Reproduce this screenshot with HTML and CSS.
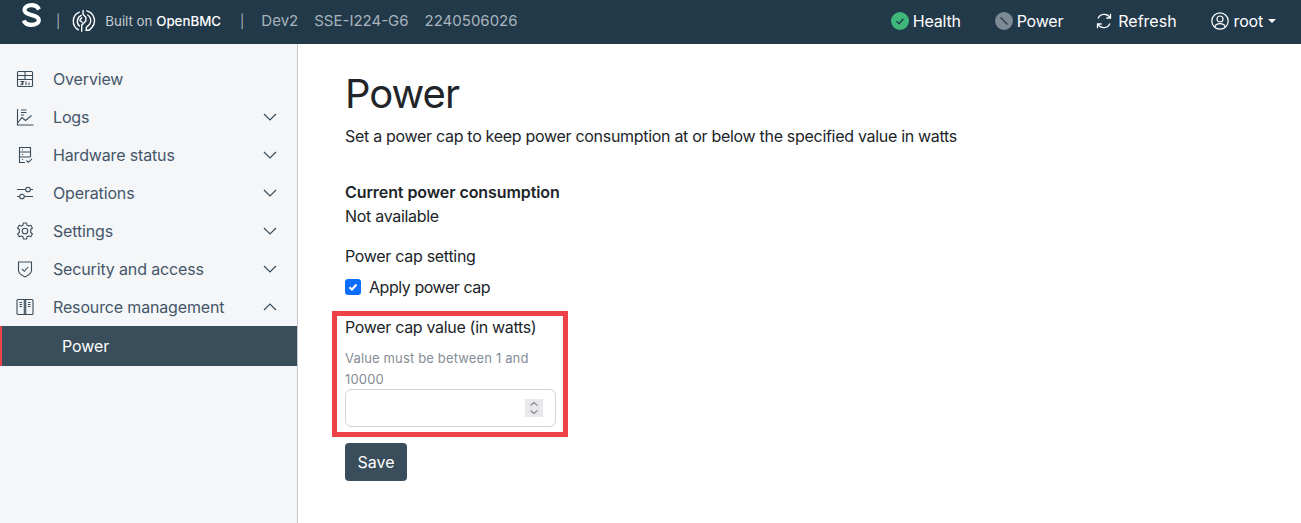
FILE: index.html
```html
<!DOCTYPE html>
<html>
  <head>
    <meta charset="UTF-8" />
    <meta name="viewport" content="width=device-width, initial-scale=1.0" />
    <title>Power</title>
    <link rel="stylesheet" href="styles.css">
  </head>
  <body>
    <header class="topbar">
      <div class="brand">
        <svg class="logo-s" width="19" height="24" viewBox="0 0 19 24" fill="none" stroke="#fff" stroke-width="4.200"><path d="M17 6.500C15.500 3.500 12.500 2.200 9.500 2.200C5.500 2.200 2.500 4 2.500 7C2.500 10 5.500 11 9.500 12C13.500 13 16.800 14 16.800 17C16.800 20 13.500 21.800 9.500 21.800C6 21.800 3 20.500 1.800 17.500" /></svg>
        <span class="sep sep-first">|</span>
        <svg class="logo-bmc" width="24" height="24" viewBox="0 0 26 26" fill="none" stroke="#fff" stroke-width="1.500" stroke-linecap="round">
          <path d="M8 3.500A10.500 10.500 0 0 0 7 22.500" />
          <path d="M10 7A7 7 0 0 0 8 18.500" />
          <path d="M12 1.500V6L15 9V13L10.500 17.500V24" />
          <path d="M16 2A11 11 0 0 1 21.500 20L18.500 23H15" />
          <path d="M17 6.500A7 7 0 0 1 19 16.500L15.500 20V22" />
          <path d="M10.500 9.500L8.500 12L11 14.500" />
        </svg>
        <span class="built">Built on <b>OpenBMC</b></span>
        <span class="sep sep-second">|</span>
        <span class="host">Dev2</span>
        <span class="host">SSE-I224-G6</span>
        <span class="host">2240506026</span>
      </div>
      <div class="status">
        <span class="status-item item-health">
          <svg width="18" height="18" viewBox="0 0 18 18"><circle cx="9" cy="9" r="9" fill="#3fb77a" /><path d="M5.500 9.300L8 11.700L12.500 6.800" fill="none" stroke="#22394a" stroke-width="1.300" /></svg>
          Health
        </span>
        <span class="status-item item-power">
          <svg width="18" height="18" viewBox="0 0 18 18"><circle cx="9" cy="9" r="9" fill="#7d8a94" /><path d="M5.500 5.500L12.500 12.500" fill="none" stroke="#22394a" stroke-width="1.300" /></svg>
          Power
        </span>
        <span class="status-item item-refresh">
          <svg width="18" height="18" viewBox="0 0 18 18" fill="none" stroke="#fff" stroke-width="1.300"><path d="M3 6.500A6.800 6.800 0 0 1 15 5.500" /><path d="M15.500 1.800V6H11.300" /><path d="M15 11.500A6.800 6.800 0 0 1 3 12.500" /><path d="M2.500 16.200V12H6.700" /></svg>
          Refresh
        </span>
        <span class="status-item item-user">
          <svg width="18" height="18" viewBox="0 0 18 18" fill="none" stroke="#fff" stroke-width="1.200"><circle cx="9" cy="9" r="8.200" /><circle cx="9" cy="7" r="3" /><path d="M3.800 15C4.500 12.300 6.500 11.700 9 11.700S13.500 12.300 14.200 15" /></svg>
          root
          <span class="caret"></span>
        </span>
      </div>
    </header>

    <div class="page">
      <nav class="sidebar">
        <a class="nav-item">
          <svg class="nav-icon" width="18" height="18" viewBox="0 0 18 18"><rect x="1.500" y="1.500" width="15" height="15" rx="1" /><path d="M1.500 5.500H16.500M1.500 9.500H16.500M9 1.500V9.500M4.500 11.500H7.500L6 13C7.800 13 7.500 15 4.500 14.700M10 11.500V15M13 12.500V15" /></svg>
          <span class="nav-label">Overview</span>
        </a>
        <a class="nav-item">
          <svg class="nav-icon" width="18" height="18" viewBox="0 0 18 18"><path d="M1.500 1V17H17.500M1.500 15L6 9.500L9.500 12.500L15.500 7.500M5 2H10.500M5 4.500H10.500M5 7H8" /></svg>
          <span class="nav-label">Logs</span>
          <svg class="chevron" width="14" height="8" viewBox="0 0 14 8"><path d="M1 1L7 7L13 1" /></svg>
        </a>
        <a class="nav-item">
          <svg class="nav-icon" width="18" height="18" viewBox="0 0 18 18"><path d="M9 16.500H3.500V1.500H14.500V11M3.500 6H14.500M3.500 11H14.500M6 3.800H7M6 8.500H7M6 13.500H7M10.500 14.500L12.300 16.300L16 12.800" /></svg>
          <span class="nav-label">Hardware status</span>
          <svg class="chevron" width="14" height="8" viewBox="0 0 14 8"><path d="M1 1L7 7L13 1" /></svg>
        </a>
        <a class="nav-item">
          <svg class="nav-icon" width="18" height="18" viewBox="0 0 18 18"><path d="M1 5.500H9.500M14.500 5.500H17M1 12.500H3.500M8.500 12.500H17" /><circle cx="12" cy="5.500" r="2.300" /><circle cx="6" cy="12.500" r="2.300" /></svg>
          <span class="nav-label">Operations</span>
          <svg class="chevron" width="14" height="8" viewBox="0 0 14 8"><path d="M1 1L7 7L13 1" /></svg>
        </a>
        <a class="nav-item">
          <svg class="nav-icon" width="18" height="18" viewBox="0 0 18 18"><circle cx="9" cy="9" r="2.800" /><path d="M7.400 1H10.600L11 3.200L12.700 4.100L14.800 3.300L16.400 6L14.700 7.500V10.500L16.400 12L14.800 14.700L12.700 13.900L11 14.800L10.600 17H7.400L7 14.800L5.300 13.900L3.200 14.700L1.600 12L3.300 10.500V7.500L1.600 6L3.200 3.300L5.300 4.100L7 3.200Z" stroke-linejoin="round" /></svg>
          <span class="nav-label">Settings</span>
          <svg class="chevron" width="14" height="8" viewBox="0 0 14 8"><path d="M1 1L7 7L13 1" /></svg>
        </a>
        <a class="nav-item">
          <svg class="nav-icon" width="18" height="18" viewBox="0 0 18 18"><path d="M2.500 2H15.500V10.500C15.500 13.500 12 15.500 9 17C6 15.500 2.500 13.500 2.500 10.500Z" /><path d="M6 9L8.300 11.300L12.300 7" /></svg>
          <span class="nav-label">Security and access</span>
          <svg class="chevron" width="14" height="8" viewBox="0 0 14 8"><path d="M1 1L7 7L13 1" /></svg>
        </a>
        <a class="nav-item">
          <svg class="nav-icon" width="18" height="18" viewBox="0 0 18 18"><rect x="1" y="1.500" width="16" height="15" rx="1" /><path d="M8.300 1.500V16.500M9.700 1.500V16.500M3.500 4.500H6M3.500 6.500H6M3.500 8.500H6M12 4.500H14.500M12 6.500H14.500M12 8.500H14.500" /></svg>
          <span class="nav-label">Resource management</span>
          <svg class="chevron" width="14" height="8" viewBox="0 0 14 8"><path d="M1 7L7 1L13 7" /></svg>
        </a>
        <a class="nav-sub">Power</a>
      </nav>

      <main class="content">
        <h1>Power</h1>
        <p class="lead">Set a power cap to keep power consumption at or below the specified value in watts</p>

        <dl class="reading">
          <dt>Current power consumption</dt>
          <dd>Not available</dd>
        </dl>

        <p class="cap-title">Power cap setting</p>
        <label class="check">
          <span class="check-box">
            <svg width="10" height="10" viewBox="0 0 10 10"><path d="M1.500 5.200L4 7.500L8.500 2.500" fill="none" stroke="#fff" stroke-width="2" /></svg>
          </span>
          Apply power cap
        </label>

        <div class="cap-group">
          <label class="cap-label" for="cap">Power cap value (in watts)</label>
          <p class="cap-hint">Value must be between 1 and 10000</p>
          <div class="cap-field">
            <input type="text" id="cap" />
            <span class="spinner">
              <svg width="18" height="18" viewBox="0 0 18 18" fill="none" stroke="#7d8790" stroke-width="1.200"><path d="M5.500 6.500L9 3.500L12.500 6.500M5.500 11.500L9 14.500L12.500 11.500" /></svg>
            </span>
          </div>
        </div>

        <button class="save">Save</button>
      </main>
    </div>
  </body>
</html>
```

FILE: styles.css
```css
* {
  box-sizing: border-box;
  margin: 0;
  padding: 0;
}

body {
  font-family: Inter, "Noto Sans", sans-serif;
  font-size: 16px;
  color: #212529;
  background-color: #fff;
  height: 523px;
  overflow: hidden;
}

.topbar {
  display: flex;
  justify-content: space-between;
  align-items: center;
  height: 44px;
  background-color: #22394a;
  color: #fff;
}

.brand {
  display: flex;
  align-items: center;
  margin-top: -3px;
}

.logo-s {
  margin-left: 22px;
  margin-top: -11px;
}

.sep {
  font-size: 13px;
  color: #a9b4bc;
}

.sep-first {
  margin-left: 15px;
}

.logo-bmc {
  margin-left: 12px;
}

.built {
  font-size: 13.300px;
  color: #c5ccd2;
  margin-left: 9px;
}

.built b {
  font-weight: 500;
  color: #fff;
}

.sep-second {
  margin-left: 19px;
  margin-right: 17px;
}

.host {
  font-size: 15px;
  color: #a9b4bc;
  margin-right: 16px;
}

.status {
  display: flex;
  align-items: center;
  margin-right: 25px;
}

.status-item {
  display: flex;
  align-items: center;
  gap: 4px;
  font-size: 16px;
  letter-spacing: -0.200px;
  margin-top: -2px;
}

.item-health {
  margin-right: 34px;
}

.item-power {
  margin-right: 32px;
}

.item-refresh {
  gap: 5px;
  letter-spacing: 0;
  margin-right: 34px;
  margin-top: -3px;
}

.item-user {
  gap: 5px;
  margin-top: -3px;
}

.caret {
  width: 0;
  height: 0;
  border-left: 4px solid transparent;
  border-right: 4px solid transparent;
  border-top: 4px solid #fff;
}

.page {
  display: flex;
  height: 479px;
}

.sidebar {
  flex: none;
  width: 298px;
  padding-top: 16px;
  background-color: #f4f6f8;
  border-right: 1px solid #c4c8cc;
}

.nav-item {
  display: flex;
  align-items: center;
  height: 38px;
  padding-left: 16px;
  padding-right: 20px;
  font-size: 16px;
  letter-spacing: -0.150px;
  color: #44566a;
}

.nav-icon {
  flex: none;
  margin-right: 19px;
  fill: none;
  stroke: #3a4c5a;
  stroke-width: 1.100;
}

.nav-label {
  flex: 1;
}

.chevron {
  fill: none;
  stroke: #3a4c5a;
  stroke-width: 1.200;
}

.nav-sub {
  display: block;
  height: 40px;
  line-height: 40px;
  padding-left: 60px;
  font-size: 16px;
  letter-spacing: -0.100px;
  color: #fff;
  background-color: #394d5b;
  border-left: 2px solid #ee4249;
}

.content {
  flex: 1;
  padding-left: 47px;
}

h1 {
  font-size: 40px;
  font-weight: 400;
  line-height: 48px;
  letter-spacing: -1px;
  margin-top: 26px;
}

.lead {
  line-height: 24px;
  letter-spacing: -0.300px;
  margin-top: 6px;
}

.reading {
  margin-top: 32px;
}

.reading dt {
  font-weight: 600;
  line-height: 24px;
  letter-spacing: -0.080px;
}

.reading dd {
  line-height: 24px;
  letter-spacing: -0.300px;
}

.cap-title {
  line-height: 24px;
  letter-spacing: -0.300px;
  margin-top: 16px;
}

.check {
  display: flex;
  align-items: center;
  gap: 8px;
  line-height: 24px;
  letter-spacing: -0.450px;
  margin-top: 7px;
}

.check-box {
  display: flex;
  align-items: center;
  justify-content: center;
  width: 16px;
  height: 16px;
  border-radius: 3px;
  background-color: #0d6efd;
}

.cap-group {
  width: 236px;
  margin-left: -13px;
  margin-top: 12px;
  padding: 0 7px 5px 8px;
  border: 5px solid #ee4249;
}

.cap-label {
  display: block;
  line-height: 24px;
  letter-spacing: -0.320px;
  margin-top: -1px;
}

.cap-hint {
  font-size: 13px;
  line-height: 21px;
  letter-spacing: 0.150px;
  color: #848d96;
  margin-top: 9px;
  margin-bottom: -1px;
}

.cap-field {
  position: relative;
  height: 38px;
}

.cap-field input {
  display: block;
  width: 100%;
  height: 38px;
  border: 1px solid #ced4da;
  border-radius: 6px;
  background-color: #fff;
}

.spinner {
  position: absolute;
  top: 10px;
  right: 13px;
  width: 18px;
  height: 18px;
  background-color: #e9e9ed;
}

.save {
  display: block;
  margin-top: 6px;
  width: 62px;
  height: 38px;
  font-family: inherit;
  font-size: 16px;
  color: #fff;
  background-color: #394d5b;
  border: none;
  border-radius: 4px;
}
```
